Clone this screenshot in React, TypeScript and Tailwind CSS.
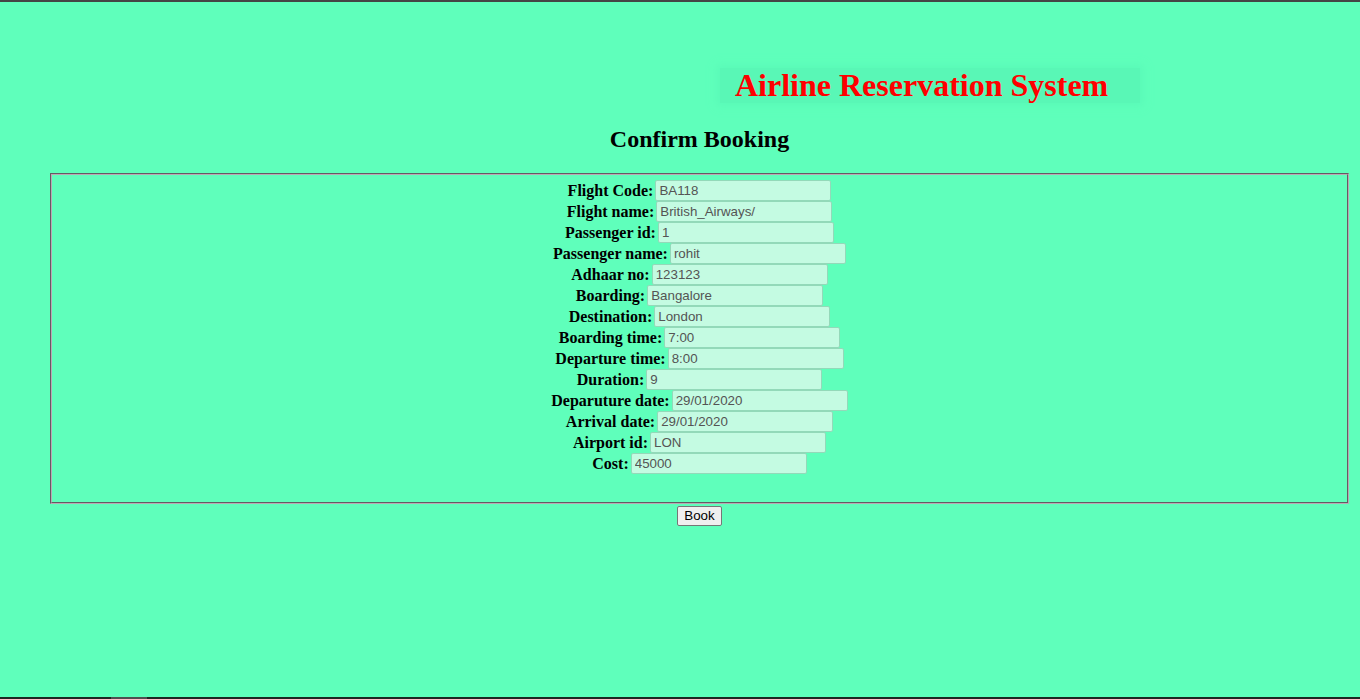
import React from 'react'

const fields = [
  { label: 'Flight Code:', value: 'BA118' },
  { label: 'Flight name:', value: 'British_Airways/' },
  { label: 'Passenger id:', value: '1' },
  { label: 'Passenger name:', value: 'rohit' },
  { label: 'Adhaar no:', value: '123123' },
  { label: 'Boarding:', value: 'Bangalore' },
  { label: 'Destination:', value: 'London' },
  { label: 'Boarding time:', value: '7:00' },
  { label: 'Departure time:', value: '8:00' },
  { label: 'Duration:', value: '9' },
  { label: 'Deparuture date:', value: '29/01/2020' },
  { label: 'Arrival date:', value: '29/01/2020' },
  { label: 'Airport id:', value: 'LON' },
  { label: 'Cost:', value: '45000' },
]

export default function App() {
  return (
    <div className="flex h-[699px] w-full flex-col overflow-hidden bg-[#5fffbb] font-['Liberation_Serif',serif] text-black">
      <div className="h-[2px] bg-[#454545]" />

      <div className="flex-1">
        {/* Title banner */}
        <div className="mt-[66px] ml-[720px] h-[35px] w-[420px] bg-[#59f7b6] pl-[15px] text-[32px] leading-[35px] font-bold text-[#ff0000] shadow-[0_0_8px_3px_#5afab8]">
          Airline Reservation System
        </div>

        <div className="ml-[50px] mr-[11px]">
          <h2 className="mt-[23px] text-center text-[24px] leading-[26px] font-bold">
            Confirm Booking
          </h2>

          <div className="mt-[21px] border-2 border-[#b9a8b4] [border-style:groove] px-[10px] pt-[5px] pb-[28px]">
            {fields.map((f) => (
              <div key={f.label} className="flex h-[21px] items-center justify-center gap-[2px]">
                <label className="text-[16px] leading-[21px] font-bold">{f.label}</label>
                <input
                  readOnly
                  value={f.value}
                  className="h-[21px] w-[176px] rounded-[2px] border border-[#93d9b9] bg-[#c4fbe2] px-[3px] font-['Liberation_Sans',Arial,sans-serif] text-[13.33px] text-[#545454] outline-none"
                />
              </div>
            ))}
          </div>

          <div className="mt-[2px] flex justify-center">
            <button className="h-[20px] rounded-[2px] border border-[#767676] bg-[#efefef] px-[6px] font-['Liberation_Sans',Arial,sans-serif] text-[13.33px] leading-[18px] text-black">
              Book
            </button>
          </div>
        </div>
      </div>

      <div className="flex h-[2px] bg-[#1d2521]">
        <div className="ml-[111px] w-[36px] bg-[#4f4f4f]" />
      </div>
    </div>
  )
}
